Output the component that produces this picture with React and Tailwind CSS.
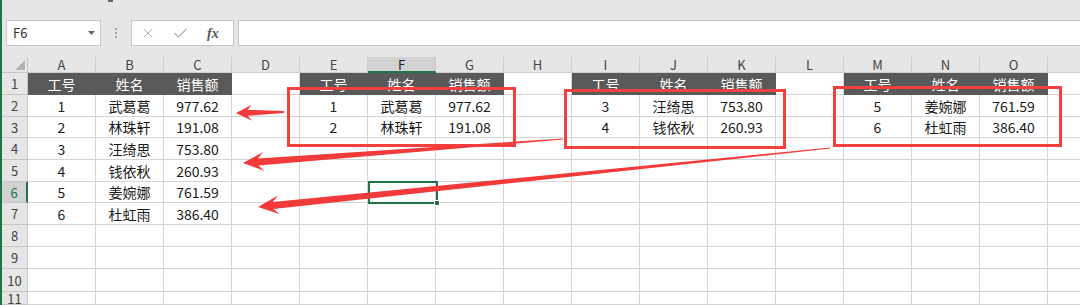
import { X, Check } from 'lucide-react';

const cols = ['A', 'B', 'C', 'D', 'E', 'F', 'G', 'H', 'I', 'J', 'K', 'L', 'M', 'N', 'O', ''];
const rowHeights = [22, 22, 21, 22, 22, 21, 22, 22, 22, 23, 13];
const heads = ['工号', '姓名', '销售额'];
const data = [
  ['1', '武葛葛', '977.62'],
  ['2', '林珠轩', '191.08'],
  ['3', '汪绮思', '753.80'],
  ['4', '钱依秋', '260.93'],
  ['5', '姜婉娜', '761.59'],
  ['6', '杜虹雨', '386.40'],
];

// 哪些列是表格：A-C 总表，E-G / I-K / M-O 三个小表
const blocks = [0, 4, 8, 12];

const getCell = (r, c) => {
  const block = blocks.find((b) => c >= b && c < b + 3);
  if (block === undefined) return { text: '' };
  const k = c - block;
  if (r === 1) return { text: heads[k], dark: true };
  if (block === 0 && r >= 2 && r <= 7) return { text: data[r - 2][k] };
  if (r === 2 || r === 3) {
    const idx = { 4: 0, 8: 2, 12: 4 }[block] + (r - 2);
    return { text: data[idx][k] };
  }
  return { text: '' };
};

const arrow = (tip, tail, headLen, headW, neckW, tailW) => {
  const dx = tail[0] - tip[0];
  const dy = tail[1] - tip[1];
  const len = Math.hypot(dx, dy);
  const ux = dx / len;
  const uy = dy / len;
  const nx = -uy;
  const ny = ux;
  const at = (d, w) => [tip[0] + ux * d + nx * w, tip[1] + uy * d + ny * w];
  const pts = [
    tip,
    at(headLen, headW / 2),
    at(headLen * 0.72, neckW / 2),
    [tail[0] + nx * tailW / 2, tail[1] + ny * tailW / 2],
    [tail[0] - nx * tailW / 2, tail[1] - ny * tailW / 2],
    at(headLen * 0.72, -neckW / 2),
    at(headLen, -headW / 2),
  ];
  return pts.map((p) => p.map((v) => v.toFixed(1)).join(',')).join(' ');
};

const App = () => {
  return (
    <div
      className="relative w-[1080px] h-[305px] overflow-hidden bg-[#e6e6e6] border-l-2 border-[#217346]"
      style={{ fontFamily: '"Noto Sans CJK SC", "Liberation Sans", sans-serif' }}
    >
      {/* 顶部残留的功能区 */}
      <div className="h-[20px] relative">
        <div className="absolute left-[106px] top-0 w-[5px] h-[2px] bg-[#666]" />
      </div>

      {/* 编辑栏 */}
      <div className="h-[26px] flex items-stretch">
        <div className="ml-[4px] w-[95px] bg-white border border-[#c6c6c6] flex items-center justify-between pl-[6px] pr-[5px]">
          <span className="text-[13px] text-[#333]">F6</span>
          <svg width="7" height="4" viewBox="0 0 7 4">
            <path d="M0 0h7L3.5 4z" fill="#666" />
          </svg>
        </div>
        <div className="w-[30px] flex flex-col items-center justify-center gap-[2px]">
          <span className="w-[2px] h-[2px] bg-[#a0a0a0]" />
          <span className="w-[2px] h-[2px] bg-[#a0a0a0]" />
          <span className="w-[2px] h-[2px] bg-[#a0a0a0]" />
        </div>
        <div className="w-[103px] bg-white border border-[#c6c6c6] flex items-center pl-[8px]">
          <X size={16} strokeWidth={1.4} color="#b0b0b0" />
          <Check size={17} strokeWidth={1.7} color="#b0b0b0" className="ml-[16px]" />
          <span
            className="ml-[18px] text-[14px] italic font-bold text-[#555]"
            style={{ fontFamily: '"Liberation Serif", serif' }}
          >
            fx
          </span>
        </div>
        <div className="ml-[4px] flex-1 bg-white border border-[#c6c6c6] border-r-0" />
      </div>
      <div className="h-[11px]" />

      {/* 列标题 */}
      <div className="h-[16px] flex">
        <div className="w-[26px] shrink-0 border-r border-b border-[#c6c6c6] relative">
          <svg className="absolute right-[2px] bottom-[2px]" width="10" height="10" viewBox="0 0 10 10">
            <path d="M10 0v10H0z" fill="#b4b4b4" />
          </svg>
        </div>
        {cols.map((c, i) => (
          <div
            key={i}
            className={
              i === 5
                ? 'w-[68px] shrink-0 flex items-center justify-center text-[13px] leading-none text-[#222] bg-[#d2d2d2] border-r border-[#c6c6c6] border-b-2 border-b-[#217346]'
                : 'w-[68px] shrink-0 flex items-center justify-center text-[13px] leading-none text-[#444] border-r border-b border-[#cfcfcf]'
            }
          >
            {c}
          </div>
        ))}
      </div>

      {/* 表格行 */}
      {rowHeights.map((h, ri) => {
        const r = ri + 1;
        return (
          <div key={r} className="flex" style={{ height: h }}>
            <div
              className={
                r === 6
                  ? 'w-[26px] shrink-0 flex items-center justify-center text-[13px] leading-none text-[#217346] bg-[#d2d2d2] border-b border-[#c6c6c6] border-r-2 border-r-[#217346]'
                  : 'w-[26px] shrink-0 flex items-center justify-center text-[13px] leading-none text-[#444] border-b border-r border-[#c6c6c6]'
              }
            >
              {r}
            </div>
            {cols.map((c, ci) => {
              const cell = getCell(r, ci);
              return (
                <div
                  key={ci}
                  className={
                    cell.dark
                      ? 'w-[68px] shrink-0 flex items-center justify-center text-[14px] leading-none text-white bg-[#595959] border-r border-b border-[#595959]'
                      : 'w-[68px] shrink-0 flex items-center justify-center text-[14px] leading-none text-[#1a1a1a] bg-white border-r border-b border-[#d4d4d4]'
                  }
                >
                  {cell.text}
                </div>
              );
            })}
          </div>
        );
      })}

      {/* 选中单元格 F6 */}
      <div className="absolute left-[366px] top-[181px] w-[70px] h-[23px] border-2 border-[#217346]">
        <div className="absolute -right-[4px] -bottom-[4px] w-[6px] h-[6px] bg-[#217346] border border-white" />
      </div>

      {/* 红框 */}
      <div className="absolute left-[285px] top-[87px] w-[229px] h-[60px] border-[3px] border-[#f43f3f]" />
      <div className="absolute left-[562px] top-[89px] w-[222px] h-[60px] border-[3px] border-[#f43f3f]" />
      <div className="absolute left-[831px] top-[86px] w-[229px] h-[61px] border-[3px] border-[#f43f3f]" />

      {/* 箭头 */}
      <svg className="absolute left-[-2px] top-0 pointer-events-none" width="1080" height="305">
        <polygon points={arrow([236, 113], [284, 112], 16, 16, 6, 2)} fill="#f23a3a" />
        <polygon points={arrow([243, 163], [563, 139], 21, 19, 7, 1)} fill="#f23a3a" />
        <polygon points={arrow([258, 207], [830, 148], 21, 19, 7, 1)} fill="#f23a3a" />
      </svg>
    </div>
  );
};

export default App;
